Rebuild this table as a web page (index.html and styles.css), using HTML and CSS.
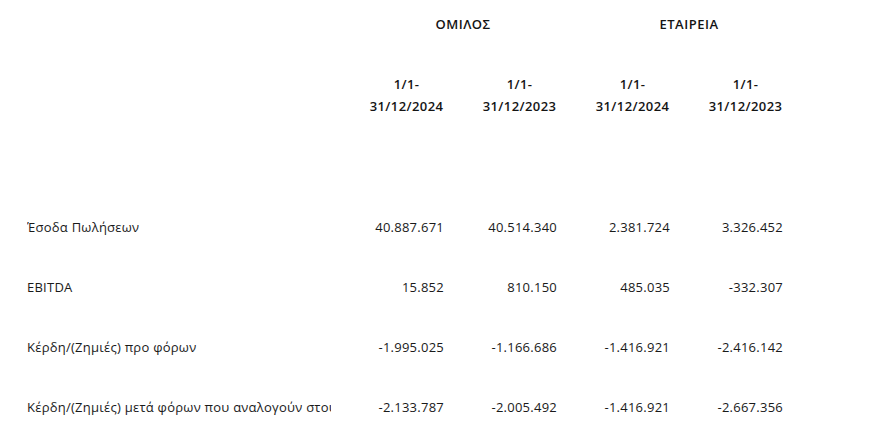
FILE: index.html
```html
<!DOCTYPE html>
<html lang="el">
<head>
<meta charset="utf-8">
<link rel="stylesheet" href="styles.css">
</head>
<body>
<div class="fin-table">
  <div class="cell label"></div>
  <div class="cell group span2">ΟΜΙΛΟΣ</div>
  <div class="cell group span2">ΕΤΑΙΡΕΙΑ</div>

  <div class="cell label period-row"></div>
  <div class="cell period">1/1-<br>31/12/2024</div>
  <div class="cell period">1/1-<br>31/12/2023</div>
  <div class="cell period">1/1-<br>31/12/2024</div>
  <div class="cell period">1/1-<br>31/12/2023</div>

  <div class="cell label row"><span class="clip">Έσοδα Πωλήσεων</span></div>
  <div class="cell num row">40.887.671</div>
  <div class="cell num row">40.514.340</div>
  <div class="cell num row">2.381.724</div>
  <div class="cell num row">3.326.452</div>

  <div class="cell label row"><span class="clip">EBITDA</span></div>
  <div class="cell num row">15.852</div>
  <div class="cell num row">810.150</div>
  <div class="cell num row">485.035</div>
  <div class="cell num row">-332.307</div>

  <div class="cell label row"><span class="clip">Κέρδη/(Ζημιές) προ φόρων</span></div>
  <div class="cell num row">-1.995.025</div>
  <div class="cell num row">-1.166.686</div>
  <div class="cell num row">-1.416.921</div>
  <div class="cell num row">-2.416.142</div>

  <div class="cell label row"><span class="clip">Κέρδη/(Ζημιές) μετά φόρων που αναλογούν στους μετόχους της μητρικής</span></div>
  <div class="cell num row">-2.133.787</div>
  <div class="cell num row">-2.005.492</div>
  <div class="cell num row">-1.416.921</div>
  <div class="cell num row">-2.667.356</div>
</div>
</body>
</html>
```
FILE: styles.css
```css
html, body {
  margin: 0;
  padding: 0;
  background: #ffffff;
}
body {
  font-family: "Open Sans", "Liberation Sans", sans-serif;
  font-size: 13px;
  color: #1a1a1a;
  letter-spacing: 0.25px;
  overflow: hidden;
}
.fin-table {
  display: grid;
  grid-template-columns: 350px repeat(4, 113px);
  width: 802px;
}
.cell {
  line-height: 22px;
  padding-right: 19px;
  white-space: nowrap;
  min-width: 0;
}
.label {
  padding-left: 27px;
}
.clip {
  display: block;
  overflow: hidden;
  white-space: nowrap;
  min-width: 0;
  width: 100%;
}
.group {
  grid-column: span 2;
  text-align: center;
  padding: 13px 0;
  font-weight: 600;
  letter-spacing: 0.5px;
  color: #141414;
}
.period-row {
  height: 149px;
}
.period {
  text-align: center;
  padding: 25px 0 0 0;
  font-weight: 600;
  letter-spacing: 0.4px;
  color: #141414;
  height: 149px;
  box-sizing: border-box;
  display: flex;
  flex-direction: column;
  align-items: center;
}
.row {
  height: 60px;
  display: flex;
  align-items: center;
  box-sizing: border-box;
}
.num {
  justify-content: flex-end;
}
```
